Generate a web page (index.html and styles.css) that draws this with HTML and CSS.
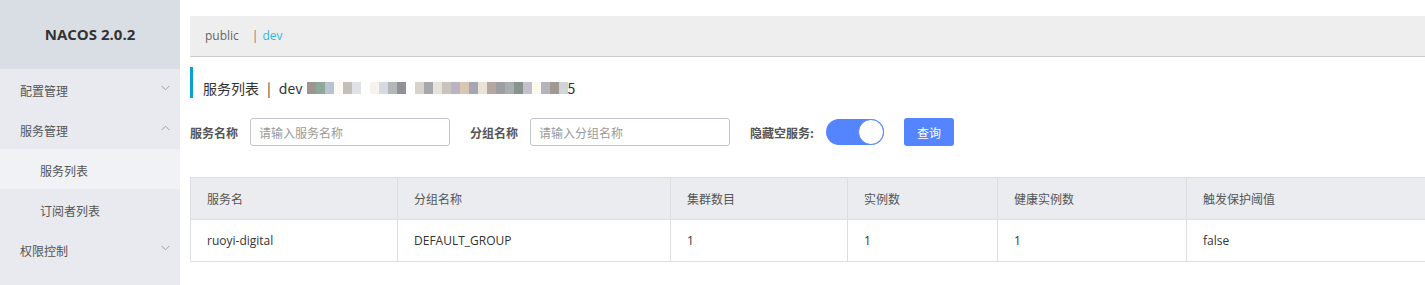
FILE: index.html
```html
<!DOCTYPE html>
<html lang="zh">
<head>
<meta charset="utf-8">
<title>Nacos</title>
<link rel="stylesheet" href="styles.css">
</head>
<body>
<div class="app">
  <aside class="sidebar">
    <div class="brand">NACOS 2.0.2</div>
    <ul class="menu">
      <li class="item"><span>配置管理</span><svg class="chev" width="9" height="6" viewBox="0 0 9 6"><polyline points="0.5,0.8 4.5,4.8 8.5,0.8" fill="none" stroke="#9aa0ab" stroke-width="1"/></svg></li>
      <li class="item"><span>服务管理</span><svg class="chev" width="9" height="6" viewBox="0 0 9 6"><polyline points="0.5,5.2 4.5,1.2 8.5,5.2" fill="none" stroke="#9aa0ab" stroke-width="1"/></svg></li>
      <li class="item sub active"><span>服务列表</span></li>
      <li class="item sub"><span>订阅者列表</span></li>
      <li class="item"><span>权限控制</span><svg class="chev" width="9" height="6" viewBox="0 0 9 6"><polyline points="0.5,0.8 4.5,4.8 8.5,0.8" fill="none" stroke="#9aa0ab" stroke-width="1"/></svg></li>
    </ul>
  </aside>
  <main class="main">
    <div class="nsbar"><span class="ns">public</span><span class="sep">|</span><span class="ns cur">dev</span></div>
    <h1 class="title">服务列表 <span class="bar">|</span> dev <span class="mosaic"><i style="background:#9c9690"></i><i style="background:#8fa79a"></i><i style="background:#b7c3d1"></i><i style="background:#fbfbf6"></i><i style="background:#c4bfba"></i><i style="background:#dfe3e8"></i><i style="background:#fff"></i><i style="background:#f6f3ee"></i><i style="background:#d6dbe3"></i><i style="background:#b4b6b9"></i><i style="background:#8f9196"></i><i style="background:#fff"></i><i style="background:#d9d3cb"></i><i style="background:#a6a8ac"></i><i style="background:#e6e3dc"></i><i style="background:#c9c3bb"></i><i style="background:#b9b3c3"></i><i style="background:#d8c6b3"></i><i style="background:#a5a8b3"></i><i style="background:#eae3d8"></i><i style="background:#b5a7a1"></i><i style="background:#9e9fa3"></i><i style="background:#a9aeb3"></i><i style="background:#87938d"></i><i style="background:#c6c0cd"></i><i style="background:#fdf9ef"></i><i style="background:#b3b4b7"></i><i style="background:#a19a94"></i><i style="background:#d2d4d7"></i></span>5</h1>
    <form class="filters">
      <label class="lbl">服务名称</label>
      <input class="inp" placeholder="请输入服务名称">
      <label class="lbl">分组名称</label>
      <input class="inp" placeholder="请输入分组名称">
      <label class="lbl">隐藏空服务:</label>
      <span class="switch"><span class="knob"></span></span>
      <button type="button" class="btn">查询</button>
    </form>
    <table class="grid">
      <colgroup><col class="c1"><col class="c2"><col class="c3"><col class="c4"><col class="c5"><col class="c6"></colgroup>
      <thead><tr><th>服务名</th><th>分组名称</th><th>集群数目</th><th>实例数</th><th>健康实例数</th><th>触发保护阈值</th></tr></thead>
      <tbody><tr><td>ruoyi-digital</td><td>DEFAULT_GROUP</td><td>1</td><td>1</td><td>1</td><td>false</td></tr></tbody>
    </table>
  </main>
</div>
</body>
</html>
```

FILE: styles.css
```css
* { box-sizing: border-box; }
html, body { margin: 0; padding: 0; }
body {
  width: 1425px;
  height: 285px;
  overflow: hidden;
  background: #fff;
  font-family: "Open Sans", "Noto Sans CJK SC", sans-serif;
  color: #333;
}
.app { display: flex; height: 285px; }
.sidebar {
  width: 180px;
  flex: none;
  background: #e8eaef;
}
.brand {
  height: 69px;
  background: #d9dde4;
  display: flex;
  align-items: center;
  justify-content: center;
  font-family: "Open Sans", "Noto Sans", sans-serif;
  font-weight: 700;
  font-size: 15px;
  color: #333;
  padding-bottom: 1px;
}
.menu { list-style: none; margin: 0; padding: 0; }
.item {
  height: 40px;
  display: flex;
  align-items: center;
  justify-content: space-between;
  padding: 2px 10px 0 20px;
  font-family: "Noto Sans CJK SC", sans-serif;
  font-size: 12px;
  color: #555;
}
.item.sub { padding-left: 40px; }
.item.active { background: #f0f2f5; }
.chev { margin-bottom: 4px; }
.main {
  flex: 1;
  min-width: 0;
  padding: 16px 0 0 10px;
}
.nsbar {
  height: 41px;
  background: #eee;
  border-bottom: 1px solid #ccc;
  display: flex;
  align-items: center;
  padding: 0 0 1px 15px;
  font-size: 12px;
}
.ns { color: #666; }
.sep { color: #777; margin: 0 4px 0 13px; }
.ns.cur { color: #33b5e5; }
.title {
  margin: 10px 0 0;
  height: 31px;
  border-left: 3px solid #0a9fd6;
  padding: 10px 0 0 10px;
  font-family: "Noto Sans CJK SC", sans-serif;
  font-weight: 400;
  font-size: 14px;
  line-height: 16px;
  color: #333;
  display: flex;
  align-items: center;
}
.title .bar { margin: 0 8px; }
.mosaic {
  display: inline-flex;
  flex-wrap: wrap;
  width: 261px;
  height: 12px;
  margin: 0 0 0 4px;
}
.mosaic i { display: block; width: 9px; height: 12px; }
.filters {
  margin-top: 20px;
  display: flex;
  align-items: center;
  height: 28px;
}
.lbl {
  font-family: "Noto Sans CJK SC", sans-serif;
  font-size: 12px;
  font-weight: 700;
  color: #555;
  margin-right: 12px;
}
.inp {
  width: 200px;
  height: 28px;
  border: 1px solid #c4c6cf;
  border-radius: 3px;
  padding: 0 8px;
  font-family: "Noto Sans CJK SC", sans-serif;
  font-size: 12px;
  margin-right: 20px;
  outline: none;
}
.inp::placeholder { color: #999; }
.switch {
  width: 58px;
  height: 26px;
  border-radius: 13px;
  background: #5584ff;
  display: flex;
  align-items: center;
  justify-content: flex-end;
  margin: 0 20px 0 0;
}
.knob {
  width: 26px;
  height: 26px;
  border-radius: 50%;
  background: #fff;
  border: 1px solid #5584ff;
}
.btn {
  width: 50px;
  height: 28px;
  border: none;
  border-radius: 3px;
  background: #5584ff;
  color: #fff;
  font-family: "Noto Sans CJK SC", sans-serif;
  font-size: 12px;
  padding: 0;
}
.grid {
  margin-top: 31px;
  width: 1235px;
  border-collapse: collapse;
  table-layout: fixed;
  font-size: 12px;
}
.c1 { width: 207px; }
.c2 { width: 273px; }
.c3 { width: 177px; }
.c4 { width: 150px; }
.c5 { width: 189px; }
.c6 { width: 239px; }
.grid th, .grid td {
  border: 1px solid #dcdee3;
  height: 42px;
  padding: 0 16px;
  text-align: left;
  font-weight: 400;
}
.grid th {
  background: #ebecf0;
  color: #555;
  font-family: "Noto Sans CJK SC", sans-serif;
}
.grid td { color: #333; }
.grid tr > :last-child { border-right: none; }
```
